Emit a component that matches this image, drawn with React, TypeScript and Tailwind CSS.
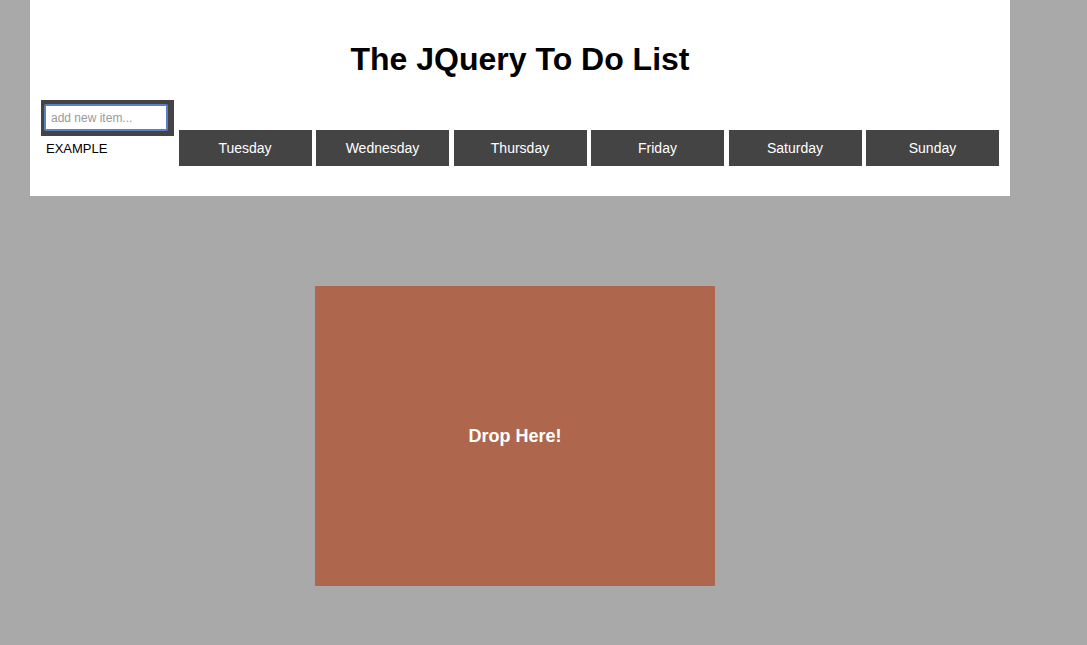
const days = ["Tuesday", "Wednesday", "Thursday", "Friday", "Saturday", "Sunday"];

export default function App() {
    return (
        <div className="min-h-screen bg-[#a9a9a9] font-['Liberation_Sans',Arial,sans-serif]">
            {/* Header panel */}
            <div className="ml-[30px] h-[196px] w-[980px] bg-white">
                <h1 className="pt-[41px] text-center text-[32px] font-bold leading-[37px] text-black">
                    The JQuery To Do List
                </h1>
                <div className="mt-[22px] flex gap-[4.5px] px-[11px]">
                    {/* Monday / new item column */}
                    <div className="w-[133px]">
                        <div className="flex h-[36px] w-[133px] items-start bg-[#444] pl-[3px] pt-[4px]">
                            <input
                                type="text"
                                placeholder="add new item..."
                                className="h-[27px] w-[124px] rounded-[2px] border-2 border-[#5a7fc4] bg-white px-[5px] text-[12px] text-black outline-none placeholder-[#999]"
                            />
                        </div>
                        <p className="mt-[4px] pl-[5px] text-[13px] leading-[18px] text-black">EXAMPLE</p>
                    </div>
                    {days.map((day) => (
                        <div
                            key={day}
                            className="mt-[30px] flex h-[36px] w-[133px] items-center justify-center bg-[#444] text-[14px] text-white"
                        >
                            {day}
                        </div>
                    ))}
                </div>
            </div>

            {/* Drop zone */}
            <div className="ml-[315px] mt-[90px] flex h-[300px] w-[400px] items-center justify-center bg-[#ae674c]">
                <span className="text-[18px] font-bold text-white">Drop Here!</span>
            </div>
        </div>
    );
}
